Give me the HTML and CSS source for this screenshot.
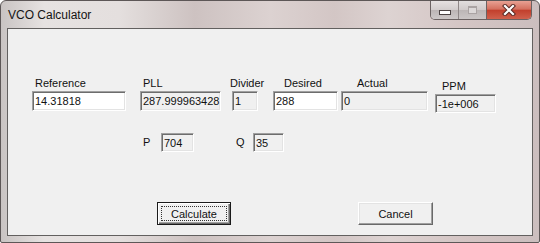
FILE: index.html
```html
<!DOCTYPE html>
<html>
	<head>
		<meta charset="UTF-8">
		<title>VCO Calculator</title>
		<link rel="stylesheet" href="styles.css">
	</head>
	<body>
		<div class="window">
			<div class="titlebar">
				<span class="title">VCO Calculator</span>
				<div class="caption_btns">
					<span class="cap_btn cap_min"><i class="min_glyph"></i></span>
					<span class="cap_btn cap_max"><i class="max_glyph"></i></span>
					<span class="cap_btn cap_close">
						<svg width="14" height="12" viewBox="0 0 14 12">
							<path d="M3 2 L11 10 M11 2 L3 10" stroke="#5a2a24" stroke-width="4.2" stroke-linecap="square"/>
							<path d="M3 2 L11 10 M11 2 L3 10" stroke="#ffffff" stroke-width="2.2" stroke-linecap="square"/>
						</svg>
					</span>
				</div>
			</div>
			<div class="client">
				<div class="row_main">
					<div class="field f_ref">
						<label>Reference</label>
						<input type="text" value="14.31818">
					</div>
					<div class="field f_pll">
						<label>PLL</label>
						<input type="text" class="ro" value="287.999963428" readonly>
					</div>
					<div class="field f_div">
						<label>Divider</label>
						<input type="text" class="ro" value="1" readonly>
					</div>
					<div class="field f_des">
						<label>Desired</label>
						<input type="text" value="288">
					</div>
					<div class="field f_act">
						<label>Actual</label>
						<input type="text" class="ro" value="0" readonly>
					</div>
					<div class="field f_ppm">
						<label>PPM</label>
						<input type="text" class="ro" value="-1e+006" readonly>
					</div>
				</div>
				<div class="row_pq">
					<span class="pq_label lbl_p">P</span>
					<input type="text" class="ro box_p" value="704" readonly>
					<span class="pq_label lbl_q">Q</span>
					<input type="text" class="ro box_q" value="35" readonly>
				</div>
				<div class="row_btns">
					<button class="btn btn_default"><span class="focus_rect">Calculate</span></button>
					<button class="btn btn_cancel">Cancel</button>
				</div>
			</div>
		</div>
	</body>
</html>
```

FILE: styles.css
```css
html,body{margin: 0; padding: 0;}
body{
	width: 540px;
	height: 243px;
	overflow: hidden;
	background: #fff;
	font-family: "Liberation Sans", Arial, sans-serif;
}
.window{
	box-sizing: border-box;
	width: 540px;
	height: 243px;
	border: 1px solid #5d5757;
	border-radius: 6px 6px 2px 2px;
	background: linear-gradient(90deg, #c9c4c3 0%, #e6e2e1 8%, #e4dfde 22%, #cdc2c1 36%, #dcd2d1 50%, #d3c6c5 62%, #ddd3d2 72%, #d4c5c4 86%, #cbbebe 100%);
	display: flex;
	flex-direction: column;
}
.titlebar{
	height: 27px;
	display: flex;
	justify-content: space-between;
	align-items: flex-start;
}
.title{
	padding: 7px 0 0 7px;
	font-size: 12px;
	line-height: 15px;
	color: #141414;
}
.caption_btns{
	display: flex;
	margin-right: 7px;
	height: 18px;
	border: 1px solid #6b6262;
	border-top: none;
	border-radius: 0 0 5px 5px;
	overflow: hidden;
}
.cap_btn{
	display: flex;
	align-items: center;
	justify-content: center;
	height: 18px;
}
.cap_min{
	width: 27px;
	border-right: 1px solid #8f8787;
	background: linear-gradient(#e6e1e1, #d2cccc 50%, #bcb5b5 51%, #cdc8c8);
}
.cap_max{
	width: 27px;
	border-right: 1px solid #6b6262;
	background: linear-gradient(#e2dede, #d0caca 50%, #bcb6b6 51%, #cbc6c6);
}
.cap_close{
	width: 44px;
	background: linear-gradient(#e8a193, #d4705f 45%, #c2402d 52%, #d0604c);
}
.min_glyph{
	display: block;
	width: 10px;
	height: 3px;
	margin-top: 5px;
	background: #fff;
	border: 1px solid #4c4444;
}
.max_glyph{
	display: block;
	width: 7px;
	height: 5px;
	border: 1px solid #aaa3a3;
	border-top-width: 2px;
	background: #dcd8d8;
}
.client{
	box-sizing: border-box;
	width: 526px;
	height: 208px;
	margin-left: 6px;
	border: 1px solid #62605f;
	background: #f0f0f0;
	font-size: 11px;
	color: #111;
}
.row_main{
	display: flex;
	align-items: flex-start;
	padding-top: 48px;
}
.field{
	display: flex;
	flex-direction: column;
}
.field label{
	height: 13px;
	line-height: 13px;
	margin-bottom: 1px;
	white-space: nowrap;
}
input{
	box-sizing: border-box;
	height: 20px;
	margin: 0;
	padding: 0 0 0 2px;
	font-family: "Liberation Sans", Arial, sans-serif;
	font-size: 11px;
	color: #111;
	background: #fff;
	border: 1px solid;
	border-color: #a0a0a0 #fff #fff #a0a0a0;
	box-shadow: inset 1px 1px 0 #6d6d6d, inset -1px -1px 0 #e3e3e3;
	outline: none;
}
input.ro{
	background: #f0f0f0;
}
.f_ref{margin-left: 24px; width: 94px;}
.f_ref label{padding-left: 3px;}
.f_pll{margin-left: 14px; width: 81px;}
.f_pll label{padding-left: 3px;}
.f_div{margin-left: 11px; width: 26px;}
.f_div label{margin-left: -2px;}
.f_des{margin-left: 15px; width: 65px;}
.f_des label{padding-left: 11px;}
.f_act{margin-left: 3px; width: 87px;}
.f_act label{padding-left: 16px;}
.f_ppm{margin-left: 7px; width: 61px; margin-top: 3px;}
.f_ppm label{padding-left: 7px;}
.f_ppm input{height: 19px;}
.row_pq{
	display: flex;
	align-items: center;
	padding: 20px 0 0 135px;
}
.pq_label{
	line-height: 13px;
}
.lbl_p{width: 18px;}
.lbl_q{width: 17px; margin-left: 42px;}
.row_pq input{height: 19px;}
.box_p{width: 33px;}
.box_q{width: 31px;}
.row_btns{
	display: flex;
	padding: 50px 0 0 149px;
}
.btn{
	box-sizing: border-box;
	height: 23px;
	margin: 0;
	padding: 0;
	font-family: "Liberation Sans", Arial, sans-serif;
	font-size: 11px;
	color: #111;
	background: #f0f0f0;
	cursor: default;
}
.btn_default{
	width: 74px;
	border: 1px solid #1a1a1a;
	box-shadow: inset 1px 1px 0 #fff, inset -1px -1px 0 #696969, inset -2px -2px 0 #a0a0a0;
	padding: 3px;
	display: flex;
}
.focus_rect{
	flex: 1;
	display: flex;
	align-items: center;
	justify-content: center;
	border: 1px dotted #333;
}
.btn_cancel{
	width: 75px;
	margin-left: 127px;
	border: 1px solid;
	border-color: #fff #696969 #696969 #fff;
	box-shadow: inset -1px -1px 0 #a0a0a0, inset 1px 1px 0 #e3e3e3;
}
```
